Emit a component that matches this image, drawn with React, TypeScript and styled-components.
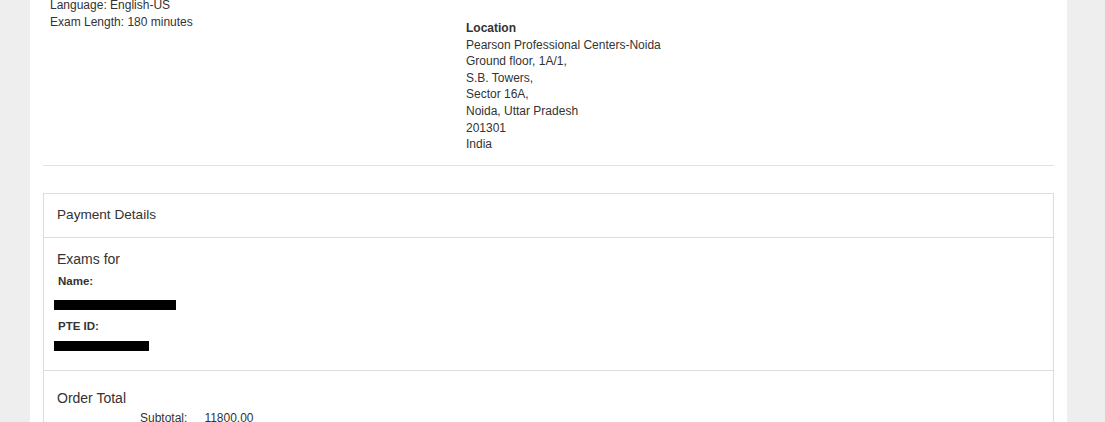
import styled, { createGlobalStyle } from 'styled-components';

const GlobalStyle = createGlobalStyle`
  html, body {
    margin: 0;
    padding: 0;
    background: #eeeeee;
    font-family: "Liberation Sans", Arial, sans-serif;
    color: #333;
    overflow: hidden;
  }
`;

const Page = styled.div`
  height: 422px;
  padding: 0 38px 0 30px;
  box-sizing: border-box;
`;

const Sheet = styled.div`
  display: flow-root;
  background: #fff;
  height: 100%;
  padding: 0 13px;
  box-sizing: border-box;
  overflow: hidden;
`;

const InfoRow = styled.div`
  display: grid;
  grid-template-columns: 423px 1fr;
  margin-top: -3px;
  padding-bottom: 12px;
  border-bottom: 1px solid #e3e3e3;
  font-size: 12px;
  line-height: 16.6px;
`;

const InfoCol = styled.div<{ $top?: number }>`
  padding-left: ${(p) => (p.$top ? 0 : 7)}px;
  padding-top: ${(p) => p.$top ?? 0}px;
`;

const LocationTitle = styled.div`
  font-weight: 700;
`;

const Panel = styled.div`
  margin-top: 27px;
  border: 1px solid #dddddd;
  border-bottom: none;
`;

const PanelHeading = styled.div`
  padding: 13px 13px 14px;
  font-size: 13.6px;
  line-height: 16px;
  border-bottom: 1px solid #dddddd;
`;

const Section = styled.div<{ $last?: boolean }>`
  padding: ${(p) => (p.$last ? 19 : 13)}px 13px ${(p) => (p.$last ? 30 : 19)}px;
  border-bottom: ${(p) => (p.$last ? 'none' : '1px solid #dddddd')};
`;

const SectionTitle = styled.div`
  font-size: 14px;
  line-height: 17px;
`;

const FieldLabel = styled.div`
  font-weight: 700;
  font-size: 11.5px;
  line-height: 14px;
  margin-top: 6px;
  padding-left: 1px;
`;

const Redacted = styled.div<{ $w: number }>`
  width: ${(p) => p.$w}px;
  height: 10px;
  background: #000;
  margin: 12px 0 9px -3px;

  &:last-child {
    margin-top: 8px;
    margin-bottom: 0;
  }
`;

const TotalsRow = styled.div`
  display: flex;
  gap: 17px;
  margin-top: 4px;
  padding-left: 83px;
  font-size: 12px;
  line-height: 14px;
`;

const location = [
  'Pearson Professional Centers-Noida',
  'Ground floor, 1A/1,',
  'S.B. Towers,',
  'Sector 16A,',
  'Noida, Uttar Pradesh',
  '201301',
  'India',
];

export default function App() {
  return (
    <>
      <GlobalStyle />
      <Page>
        <Sheet>
          <InfoRow>
            <InfoCol>
              <div>Language: English-US</div>
              <div>Exam Length: 180 minutes</div>
            </InfoCol>
            <InfoCol $top={23}>
              <LocationTitle>Location</LocationTitle>
              {location.map((line) => (
                <div key={line}>{line}</div>
              ))}
            </InfoCol>
          </InfoRow>
          <Panel>
            <PanelHeading>Payment Details</PanelHeading>
            <Section>
              <SectionTitle>Exams for</SectionTitle>
              <FieldLabel>Name:</FieldLabel>
              <Redacted $w={122} />
              <FieldLabel>PTE ID:</FieldLabel>
              <Redacted $w={95} />
            </Section>
            <Section $last>
              <SectionTitle>Order Total</SectionTitle>
              <TotalsRow>
                <span>Subtotal:</span>
                <span>11800.00</span>
              </TotalsRow>
            </Section>
          </Panel>
        </Sheet>
      </Page>
    </>
  );
}
